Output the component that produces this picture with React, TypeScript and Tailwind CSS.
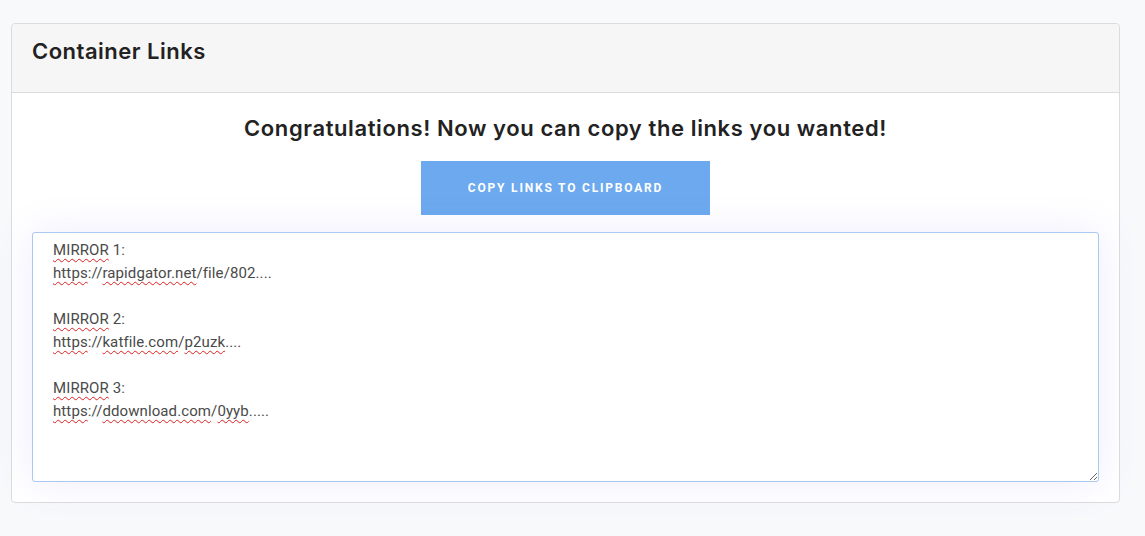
import React from "react";

const Bad = ({ children }: { children: React.ReactNode }) => (
  <span className="underline decoration-wavy decoration-[#e02020] decoration-1 underline-offset-[3px]">{children}</span>
);

export default function App() {
  return (
    <div className="min-h-[536px] w-full bg-[#f8f9fb] pt-[23px] pl-[11px] pr-[25px]">
      <div className="rounded-[4px] border border-[#dcdcdc] bg-white">
        <div className="flex h-[69px] items-center border-b border-[#dcdcdc] bg-[#f6f6f6] px-[20px] rounded-t-[4px]">
          <h2 className="text-[22px] font-semibold text-[#222] font-['Inter',sans-serif] tracking-[0.5px] pb-[13px]">
            Container Links
          </h2>
        </div>
        <div className="flex flex-col items-center px-[20px] pt-[20px] pb-[20px]">
          <h3 className="text-[22px] font-semibold text-[#222] font-['Inter',sans-serif] tracking-[0.6px] leading-[30px]">
            Congratulations! Now you can copy the links you wanted!
          </h3>
          <button className="mt-[18px] flex h-[54px] w-[289px] items-center justify-center bg-[#6ca9ee] text-[12px] font-bold tracking-[1.8px] text-white font-['Roboto',sans-serif]">
            COPY LINKS TO CLIPBOARD
          </button>
          <div
            className="mt-[17px] h-[250px] w-full resize overflow-auto rounded-[3px] border border-[#a9c8f2] bg-white px-[20px] py-[6px] text-[15px] tracking-[0.1px] leading-[23px] text-[#4a4a4a] font-['Roboto',sans-serif] shadow-[0_0_40px_rgba(120,100,240,0.12)]"
          >
            <div><Bad>MIRROR</Bad> 1:</div>
            <div><Bad>https</Bad>://<Bad>rapidgator.net</Bad>/file/802....</div>
            <div>&nbsp;</div>
            <div><Bad>MIRROR</Bad> 2:</div>
            <div><Bad>https</Bad>://<Bad>katfile.com</Bad>/<Bad>p2uzk</Bad>....</div>
            <div>&nbsp;</div>
            <div><Bad>MIRROR</Bad> 3:</div>
            <div><Bad>https</Bad>://<Bad>ddownload.com</Bad>/<Bad>0yyb</Bad>.....</div>
          </div>
        </div>
      </div>
    </div>
  );
}
